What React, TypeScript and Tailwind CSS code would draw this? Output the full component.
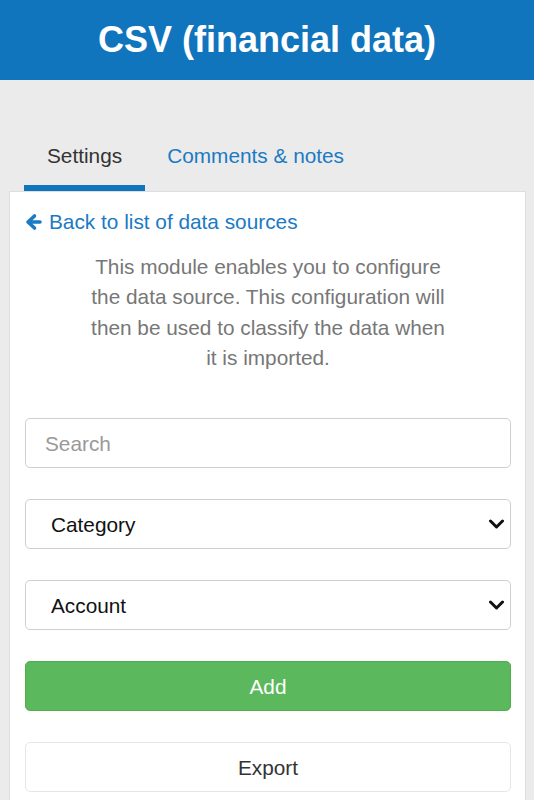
import React from 'react';

const font = { fontFamily: '"Liberation Sans", Arial, sans-serif' };

function Chevron() {
  return (
    <svg className="pointer-events-none absolute right-[6px] top-1/2 h-[10px] w-[15px] -translate-y-1/2" viewBox="0 0 15 10">
      <path d="M1.5 2 L7.5 8 L13.5 2" fill="none" stroke="#111" strokeWidth="3" strokeLinecap="round" strokeLinejoin="round" />
    </svg>
  );
}

function Select({ label }: { label: string }) {
  return (
    <div className="relative h-[50px] rounded-[5px] border border-[#cfcfcf] bg-white">
      <div className="flex h-full items-center pl-[25px] text-[20.8px] text-[#111]">{label}</div>
      <Chevron />
    </div>
  );
}

export default function App() {
  return (
    <div className="min-h-screen bg-[#ebebeb]" style={font}>
      <header className="flex h-[80px] items-center justify-center bg-[#1075bd]">
        <h1 className="text-[36px] font-bold text-white">CSV (financial data)</h1>
      </header>

      <div className="ml-[24px] mt-[61px] flex">
        <div className="border-b-[6px] border-[#1075bd] px-[23px] pb-[14px] text-[20.8px] leading-[30px] text-[#333]">
          Settings
        </div>
        <div className="px-[22px] pb-[20px] text-[20.8px] leading-[30px] text-[#1a7ac4]">Comments &amp; notes</div>
      </div>

      <div className="ml-[9px] mr-[8px] border border-[#dedede] bg-white pb-[20px] pl-[15px] pr-[14px] pt-[15px]">
        <a className="flex items-center gap-[7px] text-[20.8px] leading-[30px] text-[#1a7ac4]">
          <svg className="h-[18px] w-[17px]" viewBox="0 0 17 18">
            <path d="M15 9 H4 M9.5 3 L3 9 L9.5 15" fill="none" stroke="#1a7ac4" strokeWidth="3.6" strokeLinecap="round" strokeLinejoin="round" />
          </svg>
          Back to list of data sources
        </a>

        <p className="mx-auto mt-[15px] max-w-[366px] text-center text-[20.8px] leading-[30.3px] text-[#777]">
          This module enables you to configure the data source. This configuration will then be used to classify the data
          when it is imported.
        </p>

        <div className="mt-[45px] flex flex-col gap-[31px]">
          <div className="flex h-[50px] items-center rounded-[5px] border border-[#cfcfcf] pl-[19px] text-[20.8px] text-[#999]">
            Search
          </div>
          <Select label="Category" />
          <Select label="Account" />
          <button className="h-[50px] rounded-[5px] border border-[#4cae4c] bg-[#5cb85c] text-[20.8px] text-white">Add</button>
          <button className="h-[50px] rounded-[5px] border border-[#e6e6e6] bg-white text-[20.8px] text-[#333]">Export</button>
        </div>
      </div>
    </div>
  );
}
